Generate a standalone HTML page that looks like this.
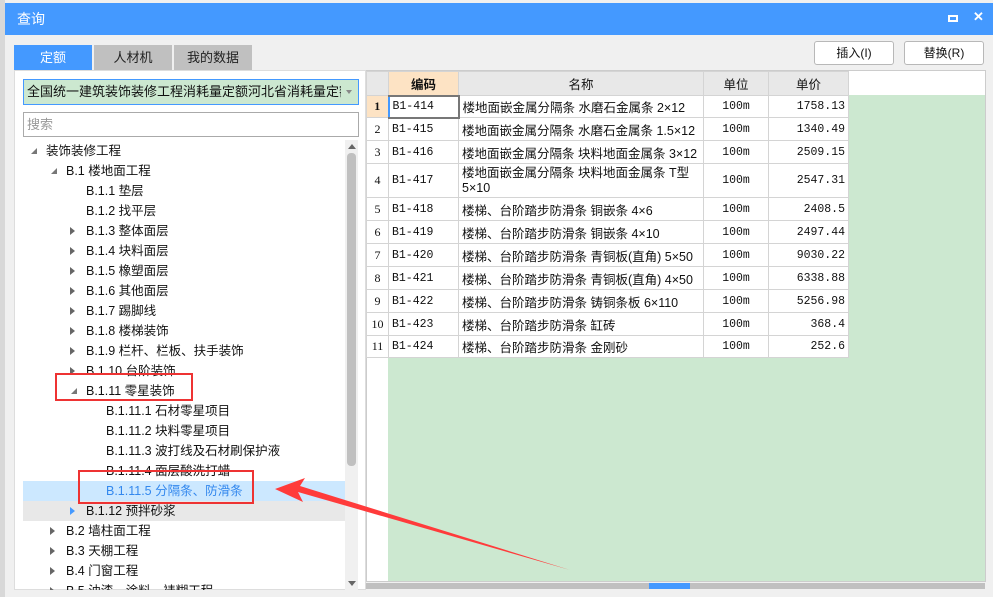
<!DOCTYPE html>
<html><head><meta charset="utf-8"><style>
*{margin:0;padding:0;box-sizing:border-box}
body{width:993px;height:597px;overflow:hidden;background:#f0f0f0;font-family:"Liberation Sans","Noto Sans CJK SC",sans-serif;font-size:12px;color:#111;position:relative}
.a{position:absolute}
.tb{left:5px;top:3px;width:988px;height:32px;background:#4499ff;color:#fff;font-size:14px;line-height:32px;padding-left:12px}
.tab{top:45px;height:25px;line-height:25px;text-align:center;font-size:13px;background:#c0c0c0;color:#222}
.btn{top:41px;height:24px;border:1px solid #b8b8b8;border-radius:3px;background:#fff;text-align:center;line-height:22px;font-size:12px}
.tr{height:20px;line-height:20px;white-space:nowrap;font-size:12.5px}
.ar{position:absolute;width:0;height:0}
.r{border-left:5px solid #666;border-top:4px solid transparent;border-bottom:4px solid transparent;top:6px}
.d{border-right:6px solid #777;border-top:6px solid transparent;top:7px}
table{border-collapse:collapse;font-size:12.5px;table-layout:fixed}
td{border:1px solid #d4d4d4;padding:0 3px;background:#fff;white-space:nowrap;overflow:hidden;vertical-align:middle}
td.n{background:#fff;text-align:center;font-family:"Liberation Serif",serif;font-size:12px}
td.c{font-family:"Liberation Mono",monospace;font-size:11.5px}
td.u{text-align:center;font-family:"Liberation Mono",monospace;font-size:11.5px}
td.p{text-align:right;font-family:"Liberation Mono",monospace;font-size:11.5px}
th{border:1px solid #d4d4d4;background:#e8e8e8;font-weight:normal;height:24px;font-size:12.5px}
</style></head><body>
<div class="a" style="left:0;top:0;width:5px;height:597px;background:#d8d8d8"></div>
<div class="a tb">查询</div>
<div class="a" style="left:948px;top:15px;width:10px;height:7px;border:2px solid #fff"></div>
<div class="a" style="left:973px;top:9px;color:#fff;font-size:13px;font-weight:bold">✕</div>
<div class="a" style="left:5px;top:35px;width:988px;height:562px;background:#f0f0f0"></div>
<div class="a tab" style="left:14px;width:78px;background:#4499ff;color:#fff">定额</div>
<div class="a tab" style="left:94px;width:78px">人材机</div>
<div class="a tab" style="left:174px;width:78px">我的数据</div>
<div class="a btn" style="left:814px;width:80px">插入(I)</div>
<div class="a btn" style="left:904px;width:80px">替换(R)</div>
<div class="a" style="left:14px;top:70px;width:352px;height:520px;background:#fff;border:1px solid #ddd"></div>
<div class="a" style="left:23px;top:79px;width:336px;height:26px;background:#cce8d0;border:1px solid #4499ff;line-height:24px;padding-left:3px;font-size:13px;white-space:nowrap;overflow:hidden"><span style="display:inline-block;width:314px;overflow:hidden">全国统一建筑装饰装修工程消耗量定额河北省消耗量定额(20</span></div>
<div class="a" style="left:346px;top:90px;border-top:4px solid #888;border-left:3px solid transparent;border-right:3px solid transparent"></div>
<div class="a" style="left:23px;top:112px;width:336px;height:25px;border:1px solid #aaa;background:#fff;color:#999;line-height:23px;padding-left:3px;font-size:13px">搜索</div>
<div class="a" style="left:23px;top:481px;width:322px;height:20px;background:#cce8ff"></div>
<div class="a" style="left:23px;top:501px;width:322px;height:20px;background:#e8e8e8"></div>
<div class="a" style="left:0;top:141px;width:345px;height:449px;overflow:hidden">
<div class="a tr" style="top:0;left:46px">装饰装修工程</div><div class="ar d" style="left:31px;top:7px"></div>
<div class="a tr" style="top:20px;left:66px">B.1 楼地面工程</div><div class="ar d" style="left:51px;top:27px"></div>
<div class="a tr" style="top:40px;left:86px">B.1.1 垫层</div>
<div class="a tr" style="top:60px;left:86px">B.1.2 找平层</div>
<div class="a tr" style="top:80px;left:86px">B.1.3 整体面层</div><div class="ar r" style="left:70px;top:86px"></div>
<div class="a tr" style="top:100px;left:86px">B.1.4 块料面层</div><div class="ar r" style="left:70px;top:106px"></div>
<div class="a tr" style="top:120px;left:86px">B.1.5 橡塑面层</div><div class="ar r" style="left:70px;top:126px"></div>
<div class="a tr" style="top:140px;left:86px">B.1.6 其他面层</div><div class="ar r" style="left:70px;top:146px"></div>
<div class="a tr" style="top:160px;left:86px">B.1.7 踢脚线</div><div class="ar r" style="left:70px;top:166px"></div>
<div class="a tr" style="top:180px;left:86px">B.1.8 楼梯装饰</div><div class="ar r" style="left:70px;top:186px"></div>
<div class="a tr" style="top:200px;left:86px">B.1.9 栏杆、栏板、扶手装饰</div><div class="ar r" style="left:70px;top:206px"></div>
<div class="a tr" style="top:220px;left:86px">B.1.10 台阶装饰</div><div class="ar r" style="left:70px;top:226px"></div>
<div class="a tr" style="top:240px;left:86px">B.1.11 零星装饰</div><div class="ar d" style="left:71px;top:247px"></div>
<div class="a tr" style="top:260px;left:106px">B.1.11.1 石材零星项目</div>
<div class="a tr" style="top:280px;left:106px">B.1.11.2 块料零星项目</div>
<div class="a tr" style="top:300px;left:106px">B.1.11.3 波打线及石材刷保护液</div>
<div class="a tr" style="top:320px;left:106px">B.1.11.4 面层酸洗打蜡</div>
<div class="a tr" style="top:340px;left:106px;color:#3388ee">B.1.11.5 分隔条、防滑条</div>
<div class="a tr" style="top:360px;left:86px">B.1.12 预拌砂浆</div><div class="ar r" style="left:70px;top:366px;border-left-color:#4499ff"></div>
<div class="a tr" style="top:380px;left:66px">B.2 墙柱面工程</div><div class="ar r" style="left:50px;top:386px"></div>
<div class="a tr" style="top:400px;left:66px">B.3 天棚工程</div><div class="ar r" style="left:50px;top:406px"></div>
<div class="a tr" style="top:420px;left:66px">B.4 门窗工程</div><div class="ar r" style="left:50px;top:426px"></div>
<div class="a tr" style="top:440px;left:66px">B.5 油漆、涂料、裱糊工程</div><div class="ar r" style="left:50px;top:446px"></div>
</div>
<div class="a" style="left:345px;top:140px;width:13px;height:450px;background:#f0f0f0"></div>
<div class="a" style="left:347px;top:153px;width:9px;height:313px;background:#c0c0c0;border-radius:4px"></div>
<div class="a" style="left:348px;top:144px;border-bottom:5px solid #666;border-left:4px solid transparent;border-right:4px solid transparent"></div>
<div class="a" style="left:348px;top:581px;border-top:5px solid #666;border-left:4px solid transparent;border-right:4px solid transparent"></div>
<div class="a" style="left:55px;top:373px;width:138px;height:28px;border:2px solid #ee3333"></div>
<div class="a" style="left:78px;top:470px;width:176px;height:34px;border:2px solid #ee3333"></div>
<div class="a" style="left:366px;top:70px;width:620px;height:512px;background:#fff;border:1px solid #ccc"></div>
<div class="a" style="left:388px;top:95px;width:597px;height:486px;background:#cce8d0"></div>
<table class="a" style="left:366px;top:71px;width:482px">
<colgroup><col style="width:22px"><col style="width:70px"><col style="width:245px"><col style="width:65px"><col style="width:80px"></colgroup>
<tr><th></th><th style="background:#fde3c4;font-weight:bold">编码</th><th>名称</th><th>单位</th><th>单价</th></tr>
<tr style="height:22px"><td class="n" style="background:#fde3c4;font-weight:bold">1</td><td class="c" style="border:2px solid #777;border-left-color:#4499ff">B1-414</td><td>楼地面嵌金属分隔条 水磨石金属条 2×12</td><td class="u">100m</td><td class="p">1758.13</td></tr>
<tr style="height:23px"><td class="n">2</td><td class="c">B1-415</td><td>楼地面嵌金属分隔条 水磨石金属条 1.5×12</td><td class="u">100m</td><td class="p">1340.49</td></tr>
<tr style="height:23px"><td class="n">3</td><td class="c">B1-416</td><td>楼地面嵌金属分隔条 块料地面金属条 3×12</td><td class="u">100m</td><td class="p">2509.15</td></tr>
<tr style="height:34px"><td class="n">4</td><td class="c">B1-417</td><td style="white-space:normal;line-height:15px">楼地面嵌金属分隔条 块料地面金属条 T型<br>5×10</td><td class="u">100m</td><td class="p">2547.31</td></tr>
<tr style="height:23px"><td class="n">5</td><td class="c">B1-418</td><td>楼梯、台阶踏步防滑条 铜嵌条 4×6</td><td class="u">100m</td><td class="p">2408.5</td></tr>
<tr style="height:23px"><td class="n">6</td><td class="c">B1-419</td><td>楼梯、台阶踏步防滑条 铜嵌条 4×10</td><td class="u">100m</td><td class="p">2497.44</td></tr>
<tr style="height:23px"><td class="n">7</td><td class="c">B1-420</td><td>楼梯、台阶踏步防滑条 青铜板(直角) 5×50</td><td class="u">100m</td><td class="p">9030.22</td></tr>
<tr style="height:23px"><td class="n">8</td><td class="c">B1-421</td><td>楼梯、台阶踏步防滑条 青铜板(直角) 4×50</td><td class="u">100m</td><td class="p">6338.88</td></tr>
<tr style="height:23px"><td class="n">9</td><td class="c">B1-422</td><td>楼梯、台阶踏步防滑条 铸铜条板 6×110</td><td class="u">100m</td><td class="p">5256.98</td></tr>
<tr style="height:23px"><td class="n">10</td><td class="c">B1-423</td><td>楼梯、台阶踏步防滑条 缸砖</td><td class="u">100m</td><td class="p">368.4</td></tr>
<tr style="height:22px"><td class="n">11</td><td class="c">B1-424</td><td>楼梯、台阶踏步防滑条 金刚砂</td><td class="u">100m</td><td class="p">252.6</td></tr>
</table>
<div class="a" style="left:366px;top:583px;width:619px;height:6px;background:#c0c0c0"></div>
<div class="a" style="left:649px;top:583px;width:41px;height:6px;background:#4499ff"></div>
<svg class="a" style="left:0;top:0" width="993" height="597"><polygon points="275,489 305,478 300,486 570,570 298,492 303,502" fill="#ff3b3b"/></svg>
</body></html>
